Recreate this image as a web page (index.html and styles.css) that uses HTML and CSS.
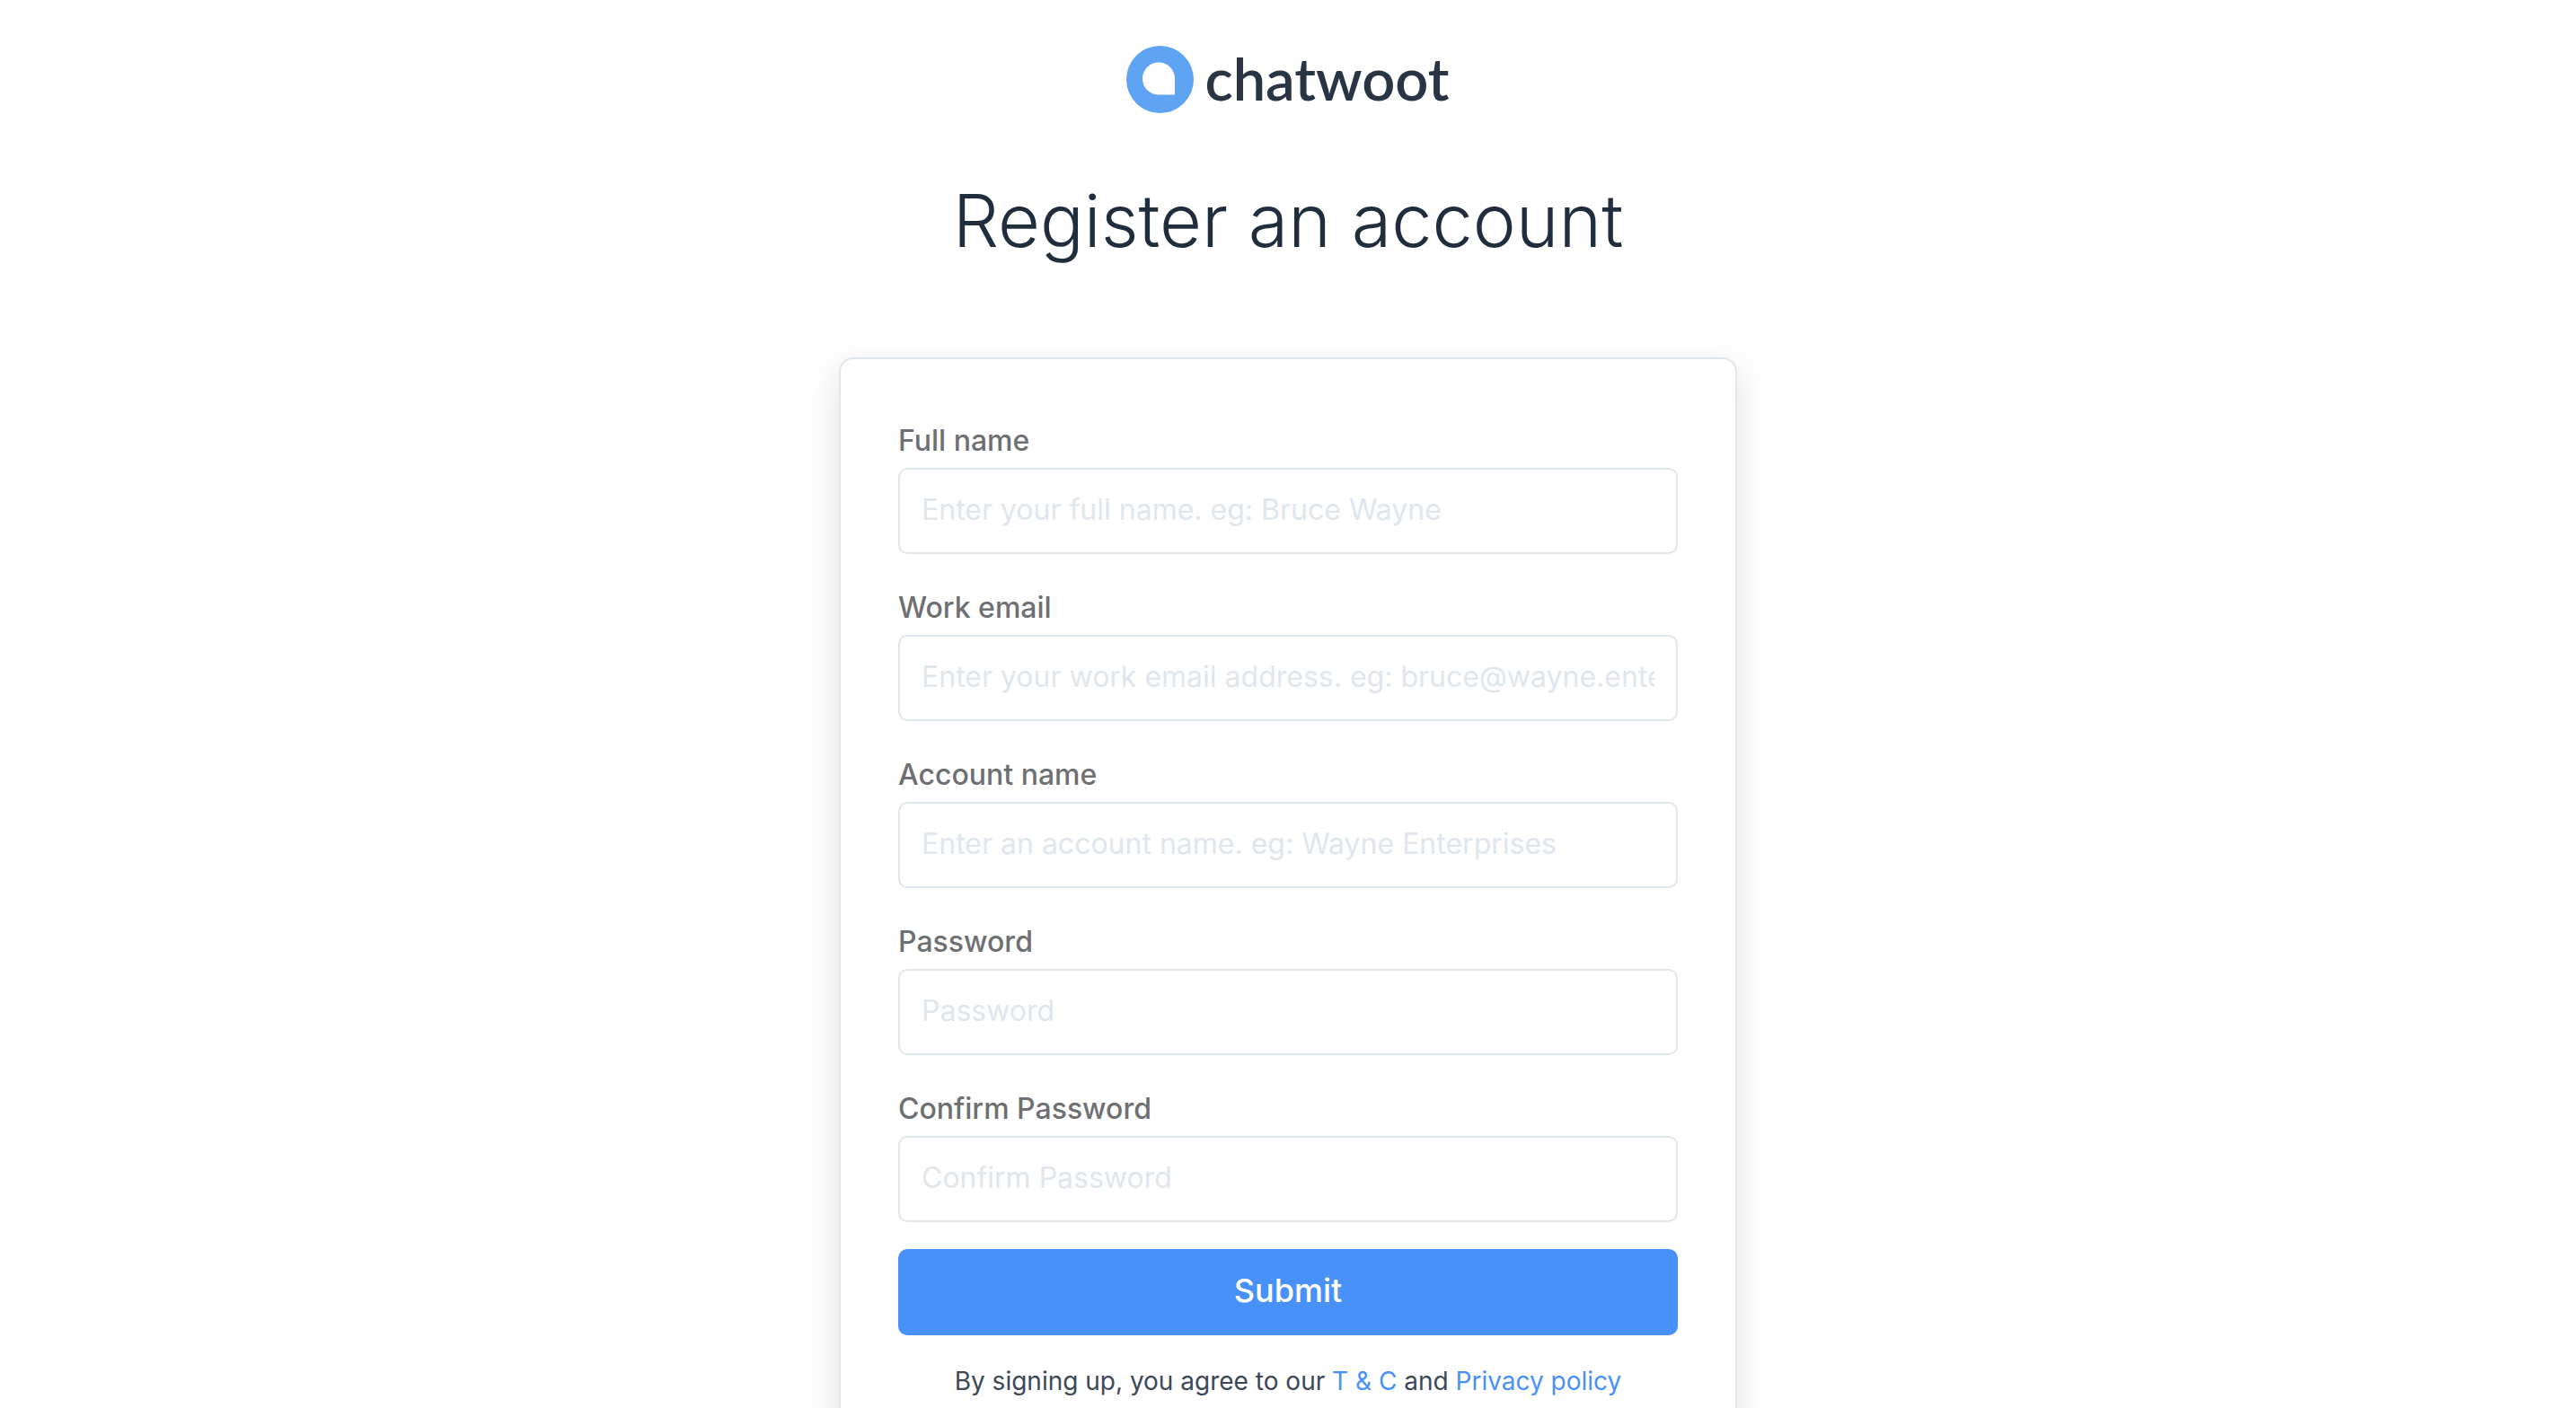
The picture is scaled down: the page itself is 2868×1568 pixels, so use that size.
FILE: index.html
```html
<!DOCTYPE html>
<html lang="en">
<head>
<meta charset="utf-8">
<meta name="viewport" content="width=device-width, initial-scale=1">
<title>Register an account</title>
<link rel="stylesheet" href="styles.css">
</head>
<body>
<main class="signup">
  <header class="signup-header">
    <div class="logo">
      <svg class="logo-mark" viewBox="0 0 75 75" aria-hidden="true">
        <circle cx="37.5" cy="37.5" r="37.5" fill="#5fa4f3"/>
        <path d="M54 54.500H36A18 18 0 1 1 54 36.500Z" fill="#fff"/>
      </svg>
      <span class="logo-name">chatwoot</span>
    </div>
    <h1 class="title">Register an account</h1>
  </header>
  <form class="card">
    <div class="fields">
      <div class="field">
        <label class="label" for="full-name">Full name</label>
        <input class="input" id="full-name" type="text" placeholder="Enter your full name. eg: Bruce Wayne">
      </div>
      <div class="field">
        <label class="label" for="email">Work email</label>
        <input class="input" id="email" type="email" placeholder="Enter your work email address. eg: bruce@wayne.enterprises">
      </div>
      <div class="field">
        <label class="label" for="account">Account name</label>
        <input class="input" id="account" type="text" placeholder="Enter an account name. eg: Wayne Enterprises">
      </div>
      <div class="field">
        <label class="label" for="password">Password</label>
        <input class="input" id="password" type="password" placeholder="Password">
      </div>
      <div class="field">
        <label class="label" for="confirm">Confirm Password</label>
        <input class="input" id="confirm" type="password" placeholder="Confirm Password">
      </div>
    </div>
    <button class="submit" type="submit">Submit</button>
    <p class="terms">By signing up, you agree to our <a class="link" href="#terms">T &amp; C</a> and <a class="link" href="#privacy">Privacy policy</a></p>
  </form>
</main>
</body>
</html>
```
FILE: styles.css
```css
*, *::before, *::after { box-sizing: border-box; }

body {
  margin: 0;
  background: #fff;
  color: #3c4858;
  font-family: Inter, "Open Sans", sans-serif;
}

.signup {
  max-width: 1000px;
  margin: 0 auto;
  padding: 51px 0 64px;
}

.signup-header {
  display: flex;
  flex-direction: column;
  align-items: center;
}

.logo {
  display: flex;
  align-items: flex-start;
  gap: 12px;
}

.logo-mark {
  width: 75px;
  height: 75px;
}

.logo-name {
  color: #293445;
  font-family: Lato, sans-serif;
  font-size: 65px;
  font-weight: 600;
  line-height: 72px;
}

.title {
  margin: 64px 0 96px;
  color: #1f2d3d;
  font-size: 81px;
  font-weight: 300;
  line-height: 112px;
  text-align: center;
}

.card {
  padding: 64px;
  border: 2px solid #e0e6ed;
  border-radius: 16px;
  box-shadow: 0 12px 40px rgba(0, 0, 0, 0.12);
}

.fields {
  display: grid;
  gap: 33px;
  margin-bottom: 30px;
}

.label {
  display: block;
  margin-bottom: 3px;
  color: #6e6f73;
  font-size: 32px;
  font-weight: 500;
  line-height: 54px;
}

.input {
  display: block;
  width: 100%;
  height: 96px;
  padding: 0 24px 4px;
  border: 2px solid #e0e6ed;
  border-radius: 10px;
  background: #fff;
  color: inherit;
  font: inherit;
  font-size: 32px;
}

.input::placeholder {
  color: #e0e6ed;
  opacity: 1;
}

.submit {
  display: block;
  width: 100%;
  height: 96px;
  padding: 0 24px 4px;
  border: 0;
  border-radius: 10px;
  background: #4891f8;
  color: #fff;
  font: inherit;
  font-size: 36px;
  font-weight: 500;
  cursor: pointer;
}

.terms {
  margin: 24px 0 0;
  font-size: 28px;
  line-height: 54px;
  text-align: center;
}

.link {
  color: #4891f8;
  text-decoration: none;
}
```
